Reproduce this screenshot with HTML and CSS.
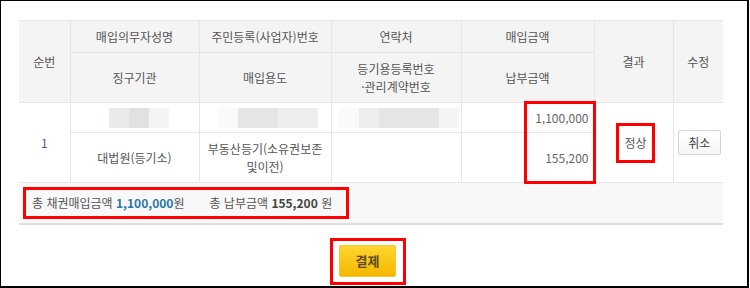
FILE: index.html
```html
<!DOCTYPE html>
<html lang="ko">
<head>
<meta charset="utf-8">
<link rel="stylesheet" href="styles.css">
</head>
<body>
<div class="frame">
  <div class="table-wrap">
    <table class="grid">
      <colgroup>
        <col class="c-no"><col class="c-name"><col class="c-id"><col class="c-tel"><col class="c-amt"><col class="c-res"><col class="c-edit">
      </colgroup>
      <thead>
        <tr class="h1">
          <th rowspan="2">순번</th>
          <th>매입의무자성명</th>
          <th>주민등록(사업자)번호</th>
          <th>연락처</th>
          <th>매입금액</th>
          <th rowspan="2">결과</th>
          <th rowspan="2">수정</th>
        </tr>
        <tr class="h2">
          <th>징구기관</th>
          <th>매입용도</th>
          <th>등기용등록번호<br>·관리계약번호</th>
          <th>납부금액</th>
        </tr>
      </thead>
      <tbody>
        <tr class="r1">
          <td rowspan="2" class="no">1</td>
          <td><div class="mosaic m-name"><i class="s1"></i><i class="s2"></i><i class="s3"></i></div></td>
          <td><div class="mosaic m-id"><i class="s6"></i><i class="s4"></i><i class="s4"></i><i class="s5"></i><i class="s5"></i></div></td>
          <td><div class="mosaic m-tel"><i class="s6"></i><i class="s5"></i><i class="s4"></i><i class="s4"></i><i class="s4"></i><i class="s3"></i></div></td>
          <td class="num">1,100,000</td>
          <td rowspan="2" class="res"><span class="mark">정상</span></td>
          <td rowspan="2" class="edit"><button class="btn-cancel">취소</button></td>
        </tr>
        <tr class="r2">
          <td>대법원(등기소)</td>
          <td>부동산등기(소유권보존<br>및이전)</td>
          <td></td>
          <td class="num">155,200</td>
        </tr>
        <tr class="sum">
          <td colspan="7">
            <span class="sum-box">총 채권매입금액 <b class="blue">1,100,000</b>원<span class="gap"></span>총 납부금액 <b>155,200</b> 원</span>
          </td>
        </tr>
      </tbody>
    </table>
    <div class="amt-mark"></div>
  </div>
  <div class="actions">
    <span class="pay-box"><button class="btn-pay">결제</button></span>
  </div>
</div>
</body>
</html>
```
FILE: styles.css
```css
html, body {
  margin: 0;
  padding: 0;
  background: #fff;
}
body {
  font-family: "Noto Sans CJK KR", "Noto Sans", sans-serif;
  font-size: 12px;
  color: #555;
}
.frame {
  box-sizing: border-box;
  width: 749px;
  height: 288px;
  border: 1px solid #000;
  border-right-width: 2px;
  border-bottom-width: 2px;
  padding: 19px 0 0 18px;
}
.table-wrap {
  position: relative;
  width: 704px;
}
.grid {
  width: 704px;
  table-layout: fixed;
  border-collapse: collapse;
  border-top: 1px solid #dcdcdc;
}
.c-no { width: 51px; }
.c-name { width: 129px; }
.c-id { width: 132px; }
.c-tel { width: 130px; }
.c-amt { width: 133px; }
.c-res { width: 79px; }
.c-edit { width: 50px; }

.grid th, .grid td {
  border: 1px solid #e6e6e6;
  padding: 0;
  text-align: center;
  vertical-align: middle;
  line-height: 18px;
  font-weight: normal;
}
.grid tr > :first-child { border-left: none; }
.grid tr > :last-child { border-right: none; }
.grid th {
  background: #f4f4f4;
  color: #555;
}
.h1 { height: 32px; }
.h2 { height: 50px; }
.r1 { height: 30px; }
.r2 { height: 50px; }
.grid tr.r2 td:first-child { border-left: 1px solid #e6e6e6; }
.grid td.no { color: #6e4a8e; border-left: none; }
.grid td.num {
  text-align: right;
  padding-right: 5px;
  color: #666;
}
.mosaic {
  display: flex;
  justify-content: center;
  height: 20px;
}
.mosaic i {
  display: block;
  width: 20px;
  height: 20px;
}
.m-name { padding-left: 9px; }
.m-id { padding-left: 6px; }
.m-tel { padding-left: 6px; }
.s1 { background: #e9ebea; }
.s2 { background: #e2e1df; }
.s3 { background: #f4f4f6; }
.s4 { background: #e6e5e6; }
.s5 { background: #eeeeee; }
.s6 { background: #fafaf8; }

.mark {
  display: inline-block;
  border: 3px solid #f00;
  padding: 8px 5px;
  margin-left: 4px;
  color: #555;
  font-size: 12px;
  line-height: 18px;
}
.btn-cancel {
  width: 43px;
  height: 25px;
  margin-left: 2px;
  padding: 0;
  border: 1px solid #d4d4d4;
  border-radius: 2px;
  background: linear-gradient(#ffffff, #f6f6f6);
  font-family: inherit;
  font-size: 12px;
  color: #444;
}
.sum {
  height: 41px;
}
.grid tr.sum td {
  background: #f8f8f8;
  text-align: left;
  border-bottom: 2px solid #dedede;
  padding-left: 4px;
}
.sum-box {
  display: inline-block;
  border: 3px solid #f00;
  padding: 0 14px 0 6px;
  line-height: 26px;
  color: #555;
}
.sum-box b {
  font-weight: bold;
  color: #444;
}
.sum-box b.blue { color: #2a77a8; }
.gap {
  display: inline-block;
  width: 25px;
}
.amt-mark {
  position: absolute;
  left: 505px;
  top: 81px;
  width: 72px;
  height: 83px;
  box-sizing: border-box;
  border: 3px solid #f00;
}
.actions {
  display: flex;
  justify-content: center;
  width: 704px;
  margin-top: 13px;
}
.pay-box {
  display: inline-block;
  border: 3px solid #f00;
  padding: 4px 7px 5px 6px;
  margin-right: 6px;
  line-height: 0;
}
.btn-pay {
  width: 57px;
  height: 32px;
  padding: 0;
  border: 1px solid #f3c637;
  border-radius: 2px;
  background: linear-gradient(#fdd52f, #f5b700);
  font-family: inherit;
  font-size: 13px;
  font-weight: bold;
  color: #5b4a18;
}
```
